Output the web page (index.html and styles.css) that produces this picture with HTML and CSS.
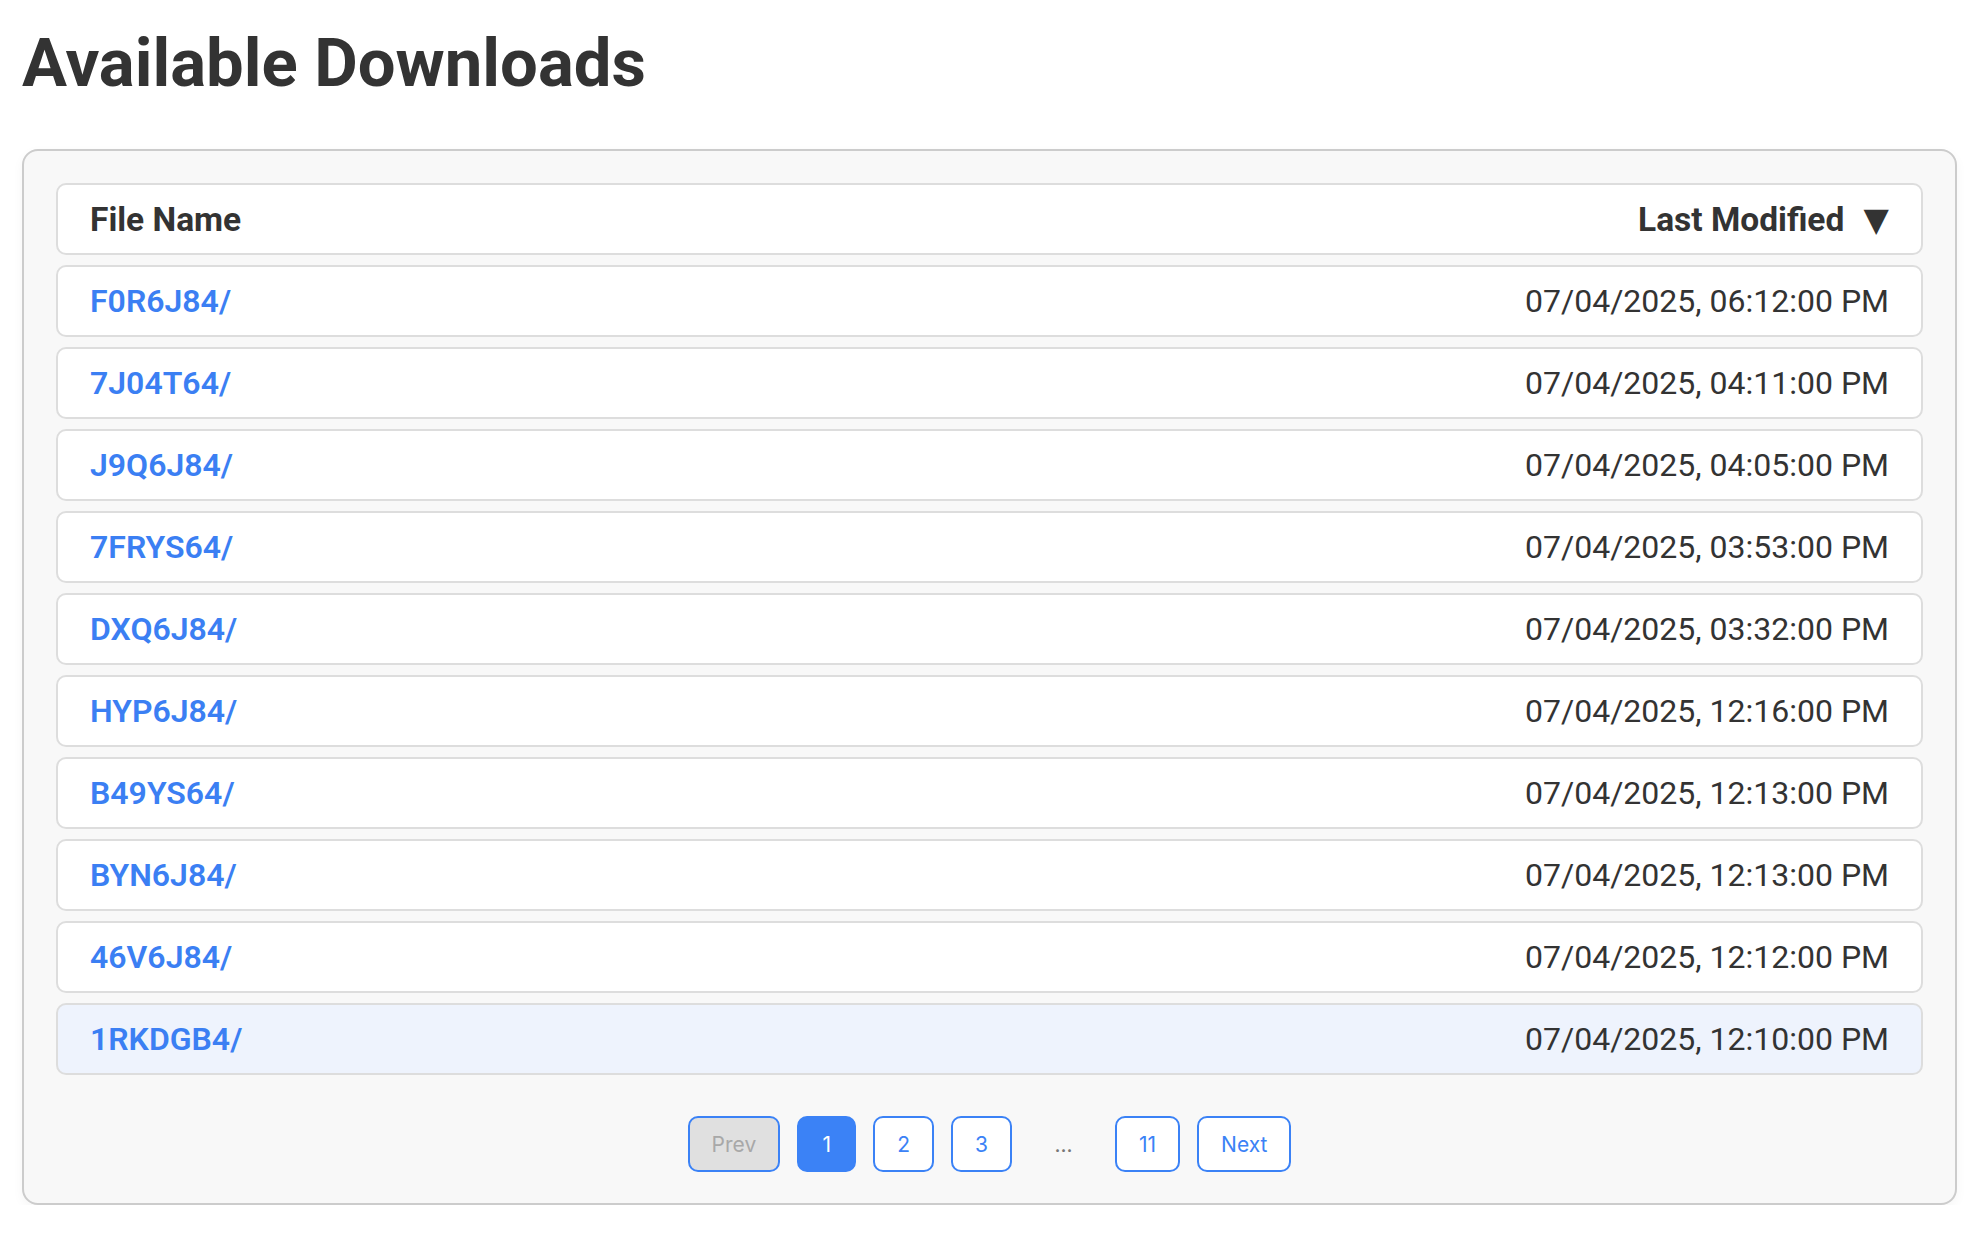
FILE: index.html
```html
<!DOCTYPE html>
<html lang="en">
<head>
<meta charset="utf-8">
<title>Available Downloads</title>
<link rel="stylesheet" href="styles.css">
</head>
<body>
<div class="page">
  <h1 class="title">Available Downloads</h1>
  <div class="card">
    <div class="list">
      <div class="row head">
        <span class="col-name">File Name</span>
        <span class="col-date">Last Modified <span class="arrow">▼</span></span>
      </div>
      <div class="row"><a class="file" href="#">F0R6J84/</a><span class="date">07/04/2025, 06:12:00 PM</span></div>
      <div class="row"><a class="file" href="#">7J04T64/</a><span class="date">07/04/2025, 04:11:00 PM</span></div>
      <div class="row"><a class="file" href="#">J9Q6J84/</a><span class="date">07/04/2025, 04:05:00 PM</span></div>
      <div class="row"><a class="file" href="#">7FRYS64/</a><span class="date">07/04/2025, 03:53:00 PM</span></div>
      <div class="row"><a class="file" href="#">DXQ6J84/</a><span class="date">07/04/2025, 03:32:00 PM</span></div>
      <div class="row"><a class="file" href="#">HYP6J84/</a><span class="date">07/04/2025, 12:16:00 PM</span></div>
      <div class="row"><a class="file" href="#">B49YS64/</a><span class="date">07/04/2025, 12:13:00 PM</span></div>
      <div class="row"><a class="file" href="#">BYN6J84/</a><span class="date">07/04/2025, 12:13:00 PM</span></div>
      <div class="row"><a class="file" href="#">46V6J84/</a><span class="date">07/04/2025, 12:12:00 PM</span></div>
      <div class="row hover"><a class="file" href="#">1RKDGB4/</a><span class="date">07/04/2025, 12:10:00 PM</span></div>
    </div>
    <div class="pager">
      <button class="btn disabled">Prev</button>
      <button class="btn active">1</button>
      <button class="btn">2</button>
      <button class="btn">3</button>
      <span class="dots">...</span>
      <button class="btn">11</button>
      <button class="btn">Next</button>
    </div>
  </div>
</div>
</body>
</html>
```
FILE: styles.css
```css
html, body {
  margin: 0;
  padding: 0;
  background: #ffffff;
}
body {
  font-family: Roboto, "Liberation Sans", Arial, sans-serif;
  color: #333333;
}
.page {
  padding: 28px 27px 0 22px;
}
.title {
  margin: 0 0 51px 0;
  font-family: Roboto, "Liberation Sans", sans-serif;
  font-weight: 700;
  font-size: 67px;
  line-height: 70px;
  color: #333333;
}
.card {
  background: #f8f8f8;
  border: 2px solid #cccccc;
  border-radius: 16px;
  padding: 32px 32px 31px 32px;
  box-shadow: 0 4px 12px rgba(0, 0, 0, 0.04);
}
.list {
  display: flex;
  flex-direction: column;
  gap: 10px;
}
.row {
  box-sizing: border-box;
  height: 72px;
  display: flex;
  align-items: center;
  justify-content: space-between;
  padding: 0 32px;
  background: #ffffff;
  border: 2px solid #dddddd;
  border-radius: 10px;
  font-size: 32px;
}
.row.hover {
  background: #eef3fd;
}
.head {
  font-weight: 700;
  font-size: 33.5px;
  color: #333333;
}
.arrow {
  font-family: "DejaVu Sans", sans-serif;
  font-size: 33px;
  margin-left: 11px;
}
.file {
  color: #3b7ff3;
  font-weight: 600;
  text-decoration: none;
}
.date {
  color: #333333;
}
.pager {
  margin-top: 41px;
  display: flex;
  justify-content: center;
  align-items: center;
  gap: 17px;
}
.btn {
  box-sizing: border-box;
  height: 56px;
  padding: 0 22px;
  min-width: 59px;
  font-family: Inter, "Noto Sans", sans-serif;
  font-size: 21px;
  color: #3b82f6;
  background: #ffffff;
  border: 2px solid #3b82f6;
  border-radius: 10px;
}
.btn.active {
  background: #3b82f6;
  color: #ffffff;
}
.btn.disabled {
  background: #e0e0e0;
  color: #a8a8a8;
}
.dots {
  width: 69px;
  text-align: center;
  font-family: Inter, sans-serif;
  font-size: 21px;
  color: #777777;
}
```
